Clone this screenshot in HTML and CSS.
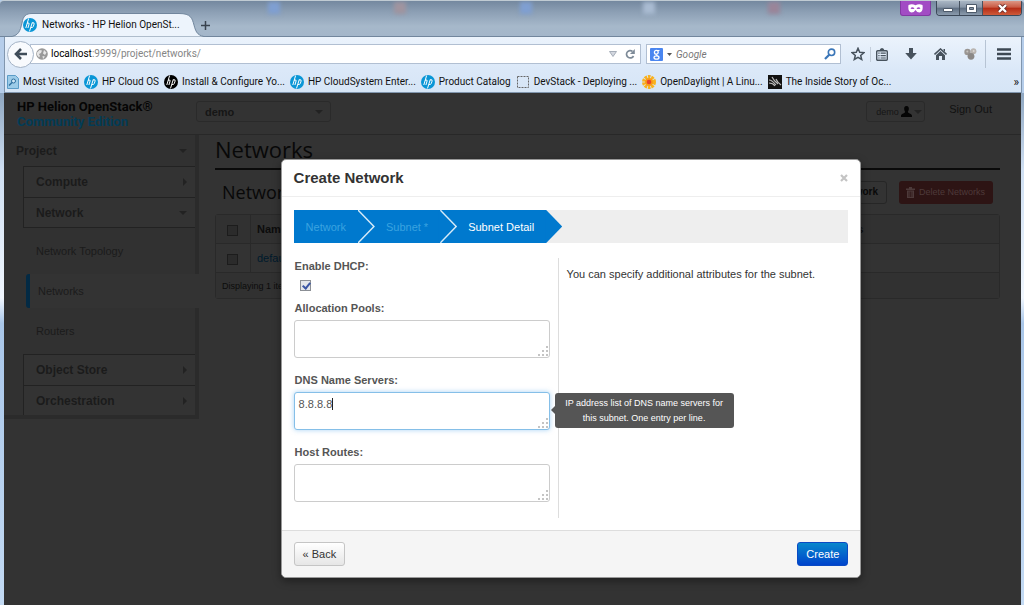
FILE: index.html
```html
<!DOCTYPE html>
<html lang="en">
<head>
<meta charset="utf-8">
<title>Networks - HP Helion OpenStack</title>
<link rel="stylesheet" href="styles.css">
</head>
<body>
<svg class="defs" width="0" height="0" aria-hidden="true">
  <symbol id="hp" viewBox="0 0 14 14">
    <circle cx="7" cy="7" r="7" fill="currentColor"/>
    <path d="M5.600 .6 2.800 10M4.200 5.400q2.300-1.200 1.900.6L4.900 10M9.300 4.400 6.500 13.400M9.100 4.900q2.600-.8 2 1.200l-.9 2.600q-.5 1-2.200.8" fill="none" stroke="#fff" stroke-width="1"/>
  </symbol>
</svg>

<header class="titlebar">
  <div class="ghosts" aria-hidden="true"><i class="g1"></i><i class="g2"></i><i class="g3"></i><i class="g4"></i><i class="g5"></i></div>
  <div class="tab">
    <svg class="tab-shape" viewBox="0 0 198 24" preserveAspectRatio="none"><path d="M0 24C10 23 11 18 13 10 14 3 17 .5 23 .5H170C182 .5 183 5 185 12 187 20 189 23 198 24Z" fill="#edf4fc" stroke="#71869d"/></svg>
    <svg class="ico tab-ico hp-blue"><use href="#hp"/></svg>
    <span class="tab-title">Networks - HP Helion OpenSt...</span>
  </div>
  <button class="newtab" aria-label="New tab"><svg width="9" height="9" viewBox="0 0 9 9"><path d="M4.500 0v9M0 4.500h9" stroke="#39434f" stroke-width="1.500"/></svg></button>
  <div class="winctl">
    <span class="mask"><svg width="15" height="9" viewBox="0 0 15 9"><path d="M.5 1Q4-.5 7.500 1.200 11-.5 14.500 1 15.500 7.500 11.500 8.500 9 8.500 7.500 6 6 8.500 3.500 8.500-.5 7.500 .5 1Z" fill="#fff"/><path d="M2.500 4.200q2-2 4 .3-2 1.300-4-.3ZM12.500 4.200q-2-2-4 .3 2 1.300 4-.3Z" fill="#a24cc4"/></svg></span>
    <div class="winbtns">
      <button class="wb" aria-label="Minimize"><svg width="11" height="9" viewBox="0 0 11 9"><path d="M.5 4.500h9v3h-9z" fill="#fff" stroke="#4d5a6a"/></svg></button>
      <button class="wb" aria-label="Restore"><svg width="11" height="9" viewBox="0 0 11 9"><path d="M.5.500h10v8H.5z" fill="#fff" stroke="#4d5a6a"/><path d="M3.500 3.500h4v2h-4z" fill="#8795a5" stroke="#4d5a6a"/></svg></button>
      <button class="wb wclose" aria-label="Close"><svg width="11" height="9" viewBox="0 0 11 9"><path d="m2 1 7 7M9 1 2 8" stroke="#6b2a26" stroke-width="4"/><path d="m2 1 7 7M9 1 2 8" stroke="#fff" stroke-width="2.400"/></svg></button>
    </div>
  </div>
</header>

<nav class="chrome">
  <div class="toolbar">
    <button class="back" aria-label="Back"><svg width="13" height="12" viewBox="0 0 13 12"><path d="M7 1 2 6l5 5M2 6h11" fill="none" stroke="#3f4c59" stroke-width="2.600"/></svg></button>
    <div class="urlbar">
      <svg width="12" height="12" viewBox="0 0 12 12"><circle cx="6" cy="6" r="5.800" fill="#999"/><path d="M1 4.500 3.500 2 6 2.500 5 5 3 6 4 8 3 9.500 1 7ZM8 2l2.500 2.500L9 7 7 5.500ZM6.500 8 9 8.500 7 11Z" fill="#e6e6e6"/></svg>
      <span class="url"><b>localhost</b>:9999/project/networks/</span>
      <svg class="push" width="8" height="6" viewBox="0 0 8 6"><path d="M.5.500h7L4 5.500Z" fill="#d3d7df" stroke="#a5adb8"/></svg>
      <svg width="10" height="10" viewBox="0 0 10 10"><path d="M8.500 7A3.700 3.700 0 1 1 7.500 2.300" fill="none" stroke="#7d8a97" stroke-width="1.700"/><path d="M9.800 0v5H5Z" fill="#7d8a97"/></svg>
    </div>
    <div class="search">
      <svg width="13" height="13" viewBox="0 0 13 13"><rect width="13" height="13" rx="1" fill="#4a86f0"/><circle cx="6.300" cy="4.300" r="1.900" fill="none" stroke="#fff" stroke-width="1.300"/><ellipse cx="6.500" cy="9.500" rx="2.500" ry="1.700" fill="none" stroke="#fff" stroke-width="1.300"/><path d="M7 2.500h2.500M6 6.300 7.500 8" stroke="#fff" stroke-width="1.200"/></svg>
      <svg width="5" height="3" viewBox="0 0 5 3"><path d="M0 0h5L2.500 3Z" fill="#555"/></svg>
      <input class="search-input" type="text" placeholder="Google" aria-label="Search">
      <svg width="12" height="12" viewBox="0 0 12 12"><circle cx="7.500" cy="4.300" r="3.200" fill="none" stroke="#3a76b8" stroke-width="1.600"/><path d="M5.200 6.700 1 11" stroke="#3a76b8" stroke-width="2.200"/></svg>
    </div>
    <div class="tools">
      <svg class="star" width="14" height="14" viewBox="0 0 14 14"><path d="m7 1.300 1.700 3.900 4.200.4-3.200 2.800 1 4.100L7 10.300l-3.700 2.200 1-4.100L1.100 5.600l4.200-.4Z" fill="none" stroke="#47525d" stroke-width="1.500"/></svg>
      <i class="sep"></i>
      <svg width="12" height="13" viewBox="0 0 12 13"><rect x=".7" y="2.700" width="10.600" height="9.600" rx="1" fill="none" stroke="#47525d" stroke-width="1.400"/><path d="M3.500 2.500Q4 0 6 0t2.500 2.500ZM2.300 4.600h1.300v1.200H2.300zM4.600 4.600h5.200v1.200H4.600zM2.300 7h1.300v1.200H2.300zM4.600 7h5.200v1.200H4.600zM2.300 9.400h1.300v1.200H2.300zM4.600 9.400h5.200v1.200H4.600z" fill="#47525d"/></svg>
      <svg width="12" height="12" viewBox="0 0 12 12"><path d="M4 0h4v5h3.800L6 11.500.2 5H4Z" fill="#47525d"/></svg>
      <svg width="13" height="12" viewBox="0 0 13 12"><path d="M.5 6.500 6.500 1l6 5.500" fill="none" stroke="#47525d" stroke-width="1.600"/><path d="M2 7.200 6.500 3 11 7.200V12H8V8H5v4H2ZM9.500 1H11v3L9.500 2.500Z" fill="#47525d"/></svg>
      <svg width="13" height="12" viewBox="0 0 13 12"><circle cx="3.500" cy="4" r="3.200" fill="#9a9693"/><circle cx="9.500" cy="3.200" r="2.900" fill="#b9b4b0"/><circle cx="7" cy="8.300" r="3.400" fill="#8b8886"/><circle cx="3.300" cy="3.600" r="1" fill="#c6c2be"/><circle cx="9.700" cy="3" r="1" fill="#dad6d2"/></svg>
      <i class="sep tall"></i>
      <svg width="14" height="12" viewBox="0 0 14 12"><path d="M0 1.500h14M0 6h14M0 10.500h14" stroke="#3d4853" stroke-width="2.300"/></svg>
    </div>
  </div>
  <div class="bookmarks">
    <a href="#"><svg width="12" height="14" viewBox="0 0 12 14"><path d="M.5.500h8l3 3v10H.5z" fill="#9ccbe8" stroke="#5c9cc7"/><circle cx="6.500" cy="6" r="2" fill="#cfe6f5" stroke="#2f6f9f"/><path d="m5 7.500-3 3" stroke="#2f6f9f" stroke-width="1.500"/></svg>Most Visited</a>
    <a href="#"><svg class="ico hp-blue"><use href="#hp"/></svg>HP Cloud OS</a>
    <a href="#"><svg class="ico hp-black"><use href="#hp"/></svg>Install &amp; Configure Yo...</a>
    <a href="#"><svg class="ico hp-blue"><use href="#hp"/></svg>HP CloudSystem Enter...</a>
    <a href="#"><svg class="ico hp-blue"><use href="#hp"/></svg>Product Catalog</a>
    <a href="#"><svg class="ico" viewBox="0 0 14 14"><rect x="1.500" y="1.500" width="11" height="11" fill="none" stroke="#666" stroke-dasharray="2 1"/></svg>DevStack - Deploying ...</a>
    <a href="#"><svg class="ico" viewBox="0 0 14 14"><circle cx="7" cy="7" r="5" fill="none" stroke="#f9b21d" stroke-width="4" stroke-dasharray="2.400 .74"/><circle cx="7" cy="7" r="4" fill="#fa9d18"/><circle cx="7" cy="7" r="2.300" fill="#e8442a"/></svg>OpenDaylight | A Linu...</a>
    <a href="#"><svg class="ico" viewBox="0 0 14 14"><path d="M0 0h14v14H0z" fill="#111"/><path d="M1 5q3 0 7 5M4 2q2 4 6 7M1 8q4 0 6 3M8 4q1 3 5 6" fill="none" stroke="#bbb" stroke-width="1.200"/></svg>The Inside Story of Oc...</a>
    <span class="more">»</span>
  </div>
</nav>

<div class="window">
  <div class="page">
    <header class="topbar">
      <div class="brand"><span>HP Helion OpenStack®</span><span class="brand-sub">Community Edition</span></div>
      <button class="project-select">demo<i class="down"></i></button>
      <button class="user">demo<svg width="11" height="11" viewBox="0 0 11 11"><path d="M5.500 0C7.500 0 8 1.500 7.800 3.200 7.600 4.600 7 5.300 6.800 5.800 6.800 7.500 11 7.500 11 10v1H0v-1C0 7.500 4.200 7.500 4.200 5.800 4 5.300 3.400 4.600 3.200 3.200 3 1.500 3.500 0 5.500 0Z" fill="#050505"/></svg><i class="down"></i></button>
      <a class="signout" href="#">Sign Out</a>
    </header>
    <div class="body">
      <nav class="sidebar">
        <button class="side-root">Project<i class="down"></i></button>
        <div class="side-group">
          <button class="side-head">Compute<i class="right"></i></button>
          <button class="side-head">Network<i class="down"></i></button>
        </div>
        <a class="side-link" href="#">Network Topology</a>
        <a class="side-link active" href="#">Networks</a>
        <a class="side-link" href="#">Routers</a>
        <div class="side-group last">
          <button class="side-head">Object Store<i class="right"></i></button>
          <button class="side-head">Orchestration<i class="right"></i></button>
        </div>
      </nav>
      <main class="main">
        <h1>Networks</h1>
        <div class="table-top">
          <h2>Networks</h2>
          <button class="create-net">Create Network</button>
          <button class="delete"><svg width="9" height="11" viewBox="0 0 9 11"><path d="M0 1.500h3V0h3v1.500h3V3H0ZM1 3.500h7V11H1Z" fill="#4d3a3a"/><path d="M3 4.500v5.500M4.500 4.500v5.500M6 4.500v5.500" stroke="#2d1414" stroke-width=".7"/></svg>Delete Networks</button>
        </div>
        <table class="nets">
          <thead><tr><th class="ck"><input type="checkbox" class="dim" aria-label="Select all"></th><th>Name</th><th class="act">Actions</th></tr></thead>
          <tbody><tr><td class="ck"><input type="checkbox" class="dim" aria-label="Select default"></td><td><a href="#">default</a></td><td></td></tr></tbody>
          <tfoot><tr><td colspan="3">Displaying 1 item</td></tr></tfoot>
        </table>
      </main>
    </div>

    <div class="overlay">
      <form class="modal" role="dialog" aria-labelledby="modal-title">
        <div class="modal-head"><h3 id="modal-title">Create Network</h3><button type="button" class="x" aria-label="Close"><svg width="8" height="8" viewBox="0 0 8 8"><path d="m1 1 6 6M7 1 1 7" stroke="#c4c4c4" stroke-width="2.200"/></svg></button></div>
        <div class="modal-body">
          <ol class="steps">
            <li>Network</li>
            <li>Subnet *</li>
            <li class="current">Subnet Detail</li>
          </ol>
          <div class="cols">
            <div class="fields">
              <label for="dhcp">Enable DHCP:</label>
              <input id="dhcp" class="check" type="checkbox" checked>
              <label for="pools">Allocation Pools:</label>
              <textarea id="pools"></textarea>
              <label for="dns">DNS Name Servers:</label>
              <div class="tip-anchor">
                <textarea id="dns" class="focused">8.8.8.8</textarea>
                <i class="caret"></i>
                <div class="tip" role="tooltip">IP address list of DNS name servers for this subnet. One entry per line.</div>
              </div>
              <label for="routes">Host Routes:</label>
              <textarea id="routes"></textarea>
            </div>
            <p class="help">You can specify additional attributes for the subnet.</p>
          </div>
        </div>
        <div class="modal-foot"><button type="button" class="btn">« Back</button><button type="button" class="btn primary">Create</button></div>
      </form>
    </div>
  </div>
</div>
</body>
</html>
```
FILE: styles.css
```css
* { box-sizing: border-box; }
body { margin: 0; min-height: 100vh; display: flex; flex-direction: column; font: 11px/16px "Liberation Sans", Arial, sans-serif; color: #444; background: #b5cdea; }
button { font: inherit; color: inherit; border: 0; background: none; padding: 0; margin: 0; display: flex; align-items: center; }
a { color: inherit; text-decoration: none; }
svg { flex: none; display: block; }
.defs { position: absolute; }
.ico { width: 14px; height: 14px; }
.hp-blue { color: #0a96d6; }
.hp-black { color: #000; }

.titlebar { position: relative; height: 37px; display: flex; align-items: flex-end; padding-left: 9px; border-top: 1px solid #c0cbd3; background: linear-gradient(#74889f, #8c9fb4 30%, #a6b8ca 70%, #a3b6ca); overflow: hidden; border-radius: 4px 4px 0 0; box-shadow: inset 0 -1px #71869d; }
.ghosts i { position: absolute; top: 1px; width: 12px; height: 12px; filter: blur(2px); background: #7f9fd2; }
.ghosts .g1 { left: 268px; }
.ghosts .g2 { left: 394px; background: #a0949f; }
.ghosts .g3 { left: 520px; }
.ghosts .g4 { left: 643px; background: #a9bbd2; }
.ghosts .g5 { left: 768px; background: #9a8599; }
.tab { position: relative; width: 198px; height: 24px; display: flex; align-items: center; gap: 5px; padding-left: 14px; font: 10px/16px Roboto, "Noto Sans", sans-serif; color: #111; }
.tab-shape { position: absolute; inset: 0; width: 100%; height: 100%; }
.tab-ico, .tab-title { position: relative; }
.tab-title { white-space: nowrap; }
.newtab { height: 24px; margin-left: -8px; padding: 0 2px; }
.winctl { position: relative; align-self: flex-start; margin-left: auto; display: flex; gap: 5px; padding-right: 2px; }
.mask { width: 31px; height: 15px; background: #a24cc4; border: 1px solid #8239a3; border-top: 0; border-radius: 0 0 3px 3px; display: flex; align-items: center; justify-content: center; }
.winbtns { display: flex; border: 1px solid #3c4858; border-top: 0; border-radius: 0 0 4px 4px; overflow: hidden; }
.wb { width: 23px; height: 14px; justify-content: center; background: linear-gradient(#a9b6c4, #8795a6 45%, #5f6f82 50%, #8b9bad); border-right: 1px solid #46525f; }
.wclose { width: 38px; border: 0; background: linear-gradient(#dc9684, #c95a43 45%, #b42b15 50%, #cf5a3a); }

.chrome { background: linear-gradient(#ebf3fc, #dbe8f8 60%, #d6e5f6); border: 1px solid #8196ae; border-top: 0; margin: 0 2px 0 4px; font: 10px/16px Roboto, "Noto Sans", sans-serif; color: #111; }
.toolbar { display: flex; align-items: center; height: 34px; padding: 0 10px 0 2px; }
.back { width: 27px; height: 27px; flex: none; justify-content: center; border-radius: 50%; background: #f8fafd; border: 1px solid #a4b3c6; position: relative; }
.urlbar { flex: 1; display: flex; align-items: center; gap: 3px; height: 20px; margin-left: -4px; padding: 0 5px 0 5px; background: #fff; border: 1px solid #b1bfd2; }
.url { color: #858585; }
.url b { font-weight: 400; color: #000; }
.push { margin-left: auto; margin-right: 5px; }
.search { width: 195px; height: 20px; margin-left: 5px; padding: 0 4px 0 3px; display: flex; align-items: center; gap: 4px; background: #fff; border: 1px solid #b1bfd2; }
.search-input { flex: 1; min-width: 0; border: 0; padding: 0; outline: 0; background: none; font: italic 10px Roboto, sans-serif; }
.search-input::placeholder { color: #777; opacity: 1; }
.tools { display: flex; align-items: center; gap: 17px; margin-left: 10px; }
.star { margin-right: -12px; }
.sep { width: 1px; height: 15px; margin-right: -12px; background: #c3cedb; }
.tall { height: 28px; margin: 0 -6px 0 -9px; background: #b7c4d4; }
.bookmarks { display: flex; align-items: center; gap: 5px; height: 21px; padding: 0 2px; }
.bookmarks a { display: flex; align-items: center; gap: 4px; white-space: nowrap; }
.more { margin-left: auto; font-size: 12px; }

.window { flex: 1; display: flex; padding: 0 3px 0 4px; background: linear-gradient(#8ea6c0, #cfdff2 15%, #f0f6fd 40%, #a9c6e8 45%, #c3daf3); }
.page { position: relative; flex: 1; background: #333; display: flex; flex-direction: column; }
.topbar { display: flex; height: 42px; padding: 0 29px 0 13px; border-bottom: 1px solid #282828; }
.brand { display: flex; flex-direction: column; width: 179px; padding-top: 6px; font: bold 13px/15px Roboto, sans-serif; color: #050505; white-space: nowrap; }
.brand-sub { color: #033c57; }
.project-select, .user { height: 21px; margin-top: 8px; border: 1px solid #2a2a2a; border-radius: 3px; color: #161616; }
.project-select { width: 135px; justify-content: space-between; padding: 0 7px 0 8px; font-weight: 700; }
.user { width: 59px; gap: 2px; margin-left: auto; padding: 0 4px 0 9px; font-size: 9px; }
.signout { margin: 8px 0 0 24px; color: #111; }
.down { border: 4px solid transparent; border-top-color: #222; border-bottom: 0; }
.right { border: 4px solid transparent; border-left-color: #222; border-right: 0; }
.body { display: flex; align-items: flex-start; }
.sidebar { width: 195px; flex: none; border: solid #2b2b2b; border-width: 0 4px 4px 0; display: flex; flex-direction: column; color: #1b1b1b; background: #313131; }
.side-root, .side-head { justify-content: space-between; height: 31px; font-weight: 700; font-size: 12px; padding: 0 8px 0 12px; }
.side-group { margin-left: 19px; border: solid #222; border-width: 1px 0 1px 1px; background: #333; }
.side-group.last { border-bottom: 0; }
.side-head { width: 100%; height: 30px; }
.side-head + .side-head { border-top: 1px solid #222; }
.side-link { height: 46px; padding-left: 32px; display: flex; align-items: center; color: #1b1b1b; }
.side-link.active { height: 34px; margin: 0 -4px 0 22px; padding-left: 8px; border-left: 4px solid #032a44; border-radius: 3px 0 0 3px; background: #333; }
.main { flex: 1; margin: 0 21px 0 16px; }
h1, h2, h3, p, ol { margin: 0; padding: 0; }
h1 { font: 22px/28px "Open Sans", sans-serif; height: 35px; border-bottom: 2px solid #0a0a0a; color: #080808; }
h2 { font: 18px/28px "Open Sans", sans-serif; color: #080808; margin-right: auto; }
.table-top { display: flex; align-items: center; gap: 12px; height: 44px; padding: 0 7px; }
.create-net { height: 23px; padding: 0 8px; border: 1px solid #262626; border-radius: 3px; color: #090909; font-weight: 700; font-size: 10px; }
.delete { height: 23px; gap: 4px; padding: 0 8px 0 7px; border-radius: 3px; background: #2d1414; color: #4d3a3a; font-size: 9px; }
.nets { width: 100%; border: 1px solid #292929; border-radius: 3px; border-spacing: 0; color: #0c0c0c; }
.nets th, .nets td { text-align: left; height: 29px; padding: 0 6px; border-bottom: 1px solid #292929; }
.nets thead, .nets tfoot { background: #313131; }
.nets .ck { width: 35px; border-right: 1px solid #292929; padding: 3px 11px 0; }
.nets .act { width: 182px; }
.nets td a { color: #001a2c; }
.nets tfoot td { height: 25px; border: 0; font-size: 9px; }
.dim { appearance: none; display: block; width: 11px; height: 11px; margin: 0; border: 1px solid #1c1c1c; background: #2b2b2b; }

.overlay { position: absolute; inset: 0; padding: 66px 15.7% 0 27.2%; }
.modal { background: #fff; border: 1px solid #999; border-radius: 5px; box-shadow: 0 3px 8px rgba(0, 0, 0, .4); }
.modal-head { display: flex; align-items: center; justify-content: space-between; height: 37px; padding: 0 12px; border-bottom: 1px solid #eee; }
h3 { font-size: 15px; line-height: 20px; color: #333; }
.modal-body { padding: 13px 12px 12px; }
.steps { display: flex; height: 33px; list-style: none; background: #eee; }
.steps li { position: relative; display: flex; align-items: center; padding: 0 11px 0 29px; background: #0079ce; color: #3aa3e0; }
.steps li:first-child { padding-left: 12px; }
.steps .current { color: #fff; padding-right: 12px; }
.steps li::before, .steps li::after { content: ""; position: absolute; z-index: 1; left: calc(100% - 1px); top: 0; width: 17px; height: 100%; background: #0079ce; clip-path: polygon(0 0, 1px 0, 100% 50%, 1px 100%, 0 100%); }
.steps li::before { margin-left: 2px; background: #d8ebf8; }
.steps .current::before { display: none; }
.cols { display: flex; margin-top: 15px; }
.fields { flex: 0 1 265px; min-height: 260px; padding-right: 8px; border-right: 1px solid #ddd; display: flex; flex-direction: column; }
.fields label { font-weight: 700; color: #555; padding: 0 1px; line-height: 16px; }
.check { appearance: none; width: 11px; height: 11px; margin: 6px 0 9px 6px; border: 1px solid #8b8f95; background: #e3e6ea; }
.check::before { content: ""; display: block; width: 3px; height: 6px; margin: 0 0 0 3px; border: solid #3a55a4; border-width: 0 2px 2px 0; transform: rotate(40deg); }
textarea { display: block; width: 100%; height: 38px; margin: 4px 0 14px; padding: 3px 4px; border: 1px solid #ccc; border-radius: 3px; resize: none; outline: 0; font: 11px/16px "Liberation Sans", Arial, sans-serif; color: #555; background: #fff url("data:image/svg+xml,%3Csvg xmlns='http://www.w3.org/2000/svg' width='10' height='10'%3E%3Cpath d='M8 0h2v2H8zM4 4h2v2H4zM8 4h2v2H8zM0 8h2v2H0zM4 8h2v2H4zM8 8h2v2H8z' fill='%23c4c4c4'/%3E%3C/svg%3E") no-repeat right 1px bottom 1px; }
.focused { border-color: #85bfe8; box-shadow: 0 0 5px rgba(82, 168, 236, .5); }
.tip-anchor { position: relative; }
.caret { position: absolute; left: 38px; top: 10px; width: 1px; height: 12px; background: #222; }
.tip { position: absolute; left: calc(100% + 5px); top: 5px; width: 179px; padding: 3px 8px 2px; border-radius: 3px; background: #555; color: #fff; text-align: center; font-size: 9px; line-height: 15px; }
.tip::before { content: ""; position: absolute; right: 100%; top: 13px; border: 4px solid transparent; border-right-color: #555; border-left: 0; }
.help { padding: 8px; color: #333; }
.modal-foot { display: flex; justify-content: space-between; align-items: center; height: 47px; padding: 0 12px; background: #f5f5f5; border-top: 1px solid #ddd; border-radius: 0 0 5px 5px; }
.btn { height: 24px; padding: 0 8px; border: 1px solid #c5c5c5; border-radius: 3px; background: linear-gradient(#fff, #e6e6e6); color: #333; }
.primary { color: #fff; border-color: #0a4ac4; background: linear-gradient(#0887cc, #0044cc); }
```
